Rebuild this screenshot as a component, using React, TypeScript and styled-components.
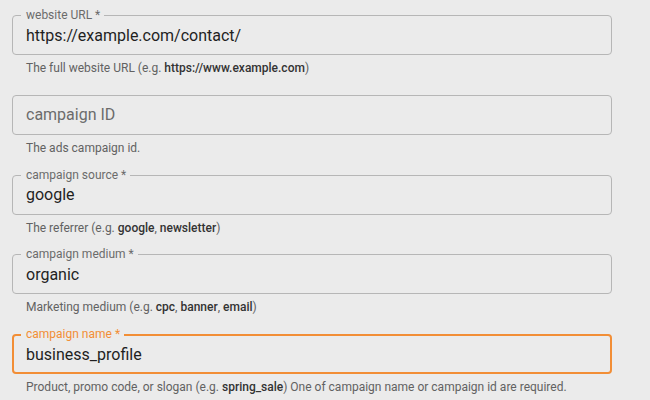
import React from "react";
import styled, { createGlobalStyle } from "styled-components";

const GlobalStyle = createGlobalStyle`
  html, body {
    margin: 0;
    padding: 0;
    background: #ebebeb;
  }
  body {
    font-family: Roboto, "Liberation Sans", Arial, sans-serif;
    -webkit-font-smoothing: antialiased;
  }
`;

const ACCENT = "#f28e36";

const Form = styled.form`
  display: flex;
  flex-direction: column;
  gap: 16.75px;
  width: 600px;
  padding: 15px 0 0 12px;
`;

const Field = styled.div`
  display: flex;
  flex-direction: column;
`;

const Box = styled.div<{ $focused?: boolean }>`
  position: relative;
  box-sizing: border-box;
  height: 40px;
  display: flex;
  align-items: center;
  border: ${(p) => (p.$focused ? `2px solid ${ACCENT}` : "1px solid #b6b6b6")};
  border-radius: 4px;
  padding: 0 ${(p) => (p.$focused ? 12 : 13)}px;
`;

const FloatLabel = styled.span<{ $focused?: boolean }>`
  position: absolute;
  top: ${(p) => (p.$focused ? -8 : -7)}px;
  left: ${(p) => (p.$focused ? 7 : 8)}px;
  padding: 0 4px 0 5px;
  background: #ebebeb;
  font-size: 12px;
  line-height: 12px;
  color: ${(p) => (p.$focused ? ACCENT : "#6b6b6b")};
  white-space: nowrap;
`;

const Value = styled.span<{ $placeholder?: boolean }>`
  font-size: 16px;
  line-height: 23px;
  color: ${(p) => (p.$placeholder ? "#6b6b6b" : "#1f1f1f")};
`;

const Helper = styled.p`
  margin: 3px 0 0 14px;
  font-size: 12px;
  line-height: 20px;
  color: #626262;
`;

const Strong = styled.b`
  font-weight: 500;
  color: #333333;
`;

type FieldDef = {
  label: string;
  value?: string;
  required?: boolean;
  focused?: boolean;
  helper: React.ReactNode;
};

const fields: FieldDef[] = [
  {
    label: "website URL",
    value: "https://example.com/contact/",
    required: true,
    helper: (
      <>
        The full website URL (e.g. <Strong>https://www.example.com</Strong>)
      </>
    ),
  },
  {
    label: "campaign ID",
    helper: <>The ads campaign id.</>,
  },
  {
    label: "campaign source",
    value: "google",
    required: true,
    helper: (
      <>
        The referrer (e.g. <Strong>google</Strong>, <Strong>newsletter</Strong>)
      </>
    ),
  },
  {
    label: "campaign medium",
    value: "organic",
    required: true,
    helper: (
      <>
        Marketing medium (e.g. <Strong>cpc</Strong>, <Strong>banner</Strong>,{" "}
        <Strong>email</Strong>)
      </>
    ),
  },
  {
    label: "campaign name",
    value: "business_profile",
    required: true,
    focused: true,
    helper: (
      <>
        Product, promo code, or slogan (e.g. <Strong>spring_sale</Strong>) One of
        campaign name or campaign id are required.
      </>
    ),
  },
];

export default function App() {
  return (
    <>
      <GlobalStyle />
      <Form>
        {fields.map((f) => (
          <Field key={f.label}>
            <Box $focused={f.focused}>
              {f.value !== undefined && (
                <FloatLabel $focused={f.focused}>
                  {f.label}
                  {f.required ? " *" : ""}
                </FloatLabel>
              )}
              {f.value !== undefined ? (
                <Value>{f.value}</Value>
              ) : (
                <Value $placeholder>{f.label}</Value>
              )}
            </Box>
            <Helper>{f.helper}</Helper>
          </Field>
        ))}
      </Form>
    </>
  );
}
